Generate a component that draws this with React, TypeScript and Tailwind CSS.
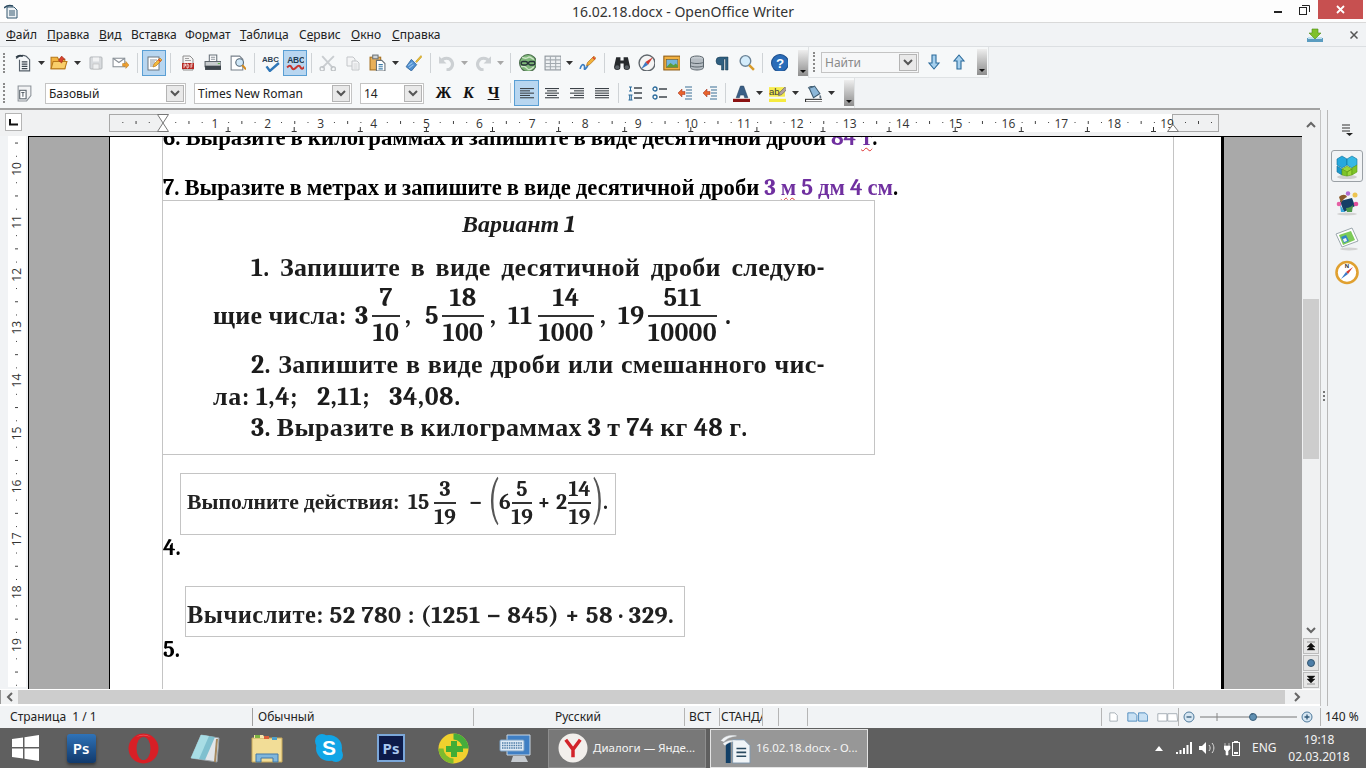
import React from "react";

const UI = "font-sans [font-family:Open_Sans,sans-serif]";
const SERIF = "font-serif [font-family:Liberation_Serif,serif]";

function S({ s = 16, children, vb = "0 0 16 16" }: { s?: number; children: React.ReactNode; vb?: string }) {
  return <svg width={s} height={s} viewBox={vb} fill="none">{children}</svg>;
}
const Btn = ({ w = "w-[25px]", active, children }: { w?: string; active?: boolean; children?: React.ReactNode }) => (
  <div className={`${w} h-[26px] flex items-center justify-center shrink-0 ${active ? "bg-[#b8d6f0] border border-[#5a9fd4]" : ""}`}>{children}</div>
);
const Arrow = ({ w = "w-[11px]", dim }: { w?: string; dim?: boolean }) => (
  <div className={`${w} shrink-0 flex items-center justify-center`}>
    <svg width="7" height="4" viewBox="0 0 7 4"><path d="M0 0h7L3.5 4z" fill={dim ? "#a8a8a8" : "#333"} /></svg>
  </div>
);
const Sep = ({ w = "w-[8px]" }: { w?: string }) => (
  <div className={`${w} shrink-0 flex justify-center`}><div className="w-px h-[20px] bg-[#cfd3d6]" /></div>
);
const Grip = () => <div className="h-[20px] w-[2px] border-l-2 border-dotted border-[#8a8a8a] shrink-0" />;
const Overflow = ({ cls }: { cls: string }) => (
  <div className={`${cls} w-[10px] h-[26px] shrink-0 bg-linear-to-b from-[#eeeeee] to-[#8e8e8e] flex items-end justify-center pb-[3px]`}>
    <svg width="6" height="3" viewBox="0 0 6 3"><path d="M0 0h6L3 3z" fill="#111" /></svg>
  </div>
);
const Chevron = () => (
  <svg width="10" height="7" viewBox="0 0 10 7" fill="none"><path d="M1 1l4 4 4-4" stroke="#555" strokeWidth="2" /></svg>
);
const Combo = ({ w, text, dim }: { w: string; text: string; dim?: boolean }) => (
  <div className={`${w} h-[21px] shrink-0 flex border border-[#c4c4c4] ${dim ? "bg-[#f6f7f8]" : "bg-white"}`}>
    <span className={`flex-1 pl-[3px] text-[12px] leading-[19px] whitespace-nowrap overflow-hidden ${dim ? "text-[#8a8a8a]" : "text-[#222]"}`}>{text}</span>
    <div className="w-[18px] bg-[#e9e9e9] border border-[#b4b4b4] m-[1px] flex items-center justify-center"><Chevron /></div>
  </div>
);

/* toolbar icons */
const IcNew = () => <S s={18}><path d="M1 4c3-3 6-3.500 9-2l3 3v10H4V5" fill="#f5f7f9" stroke="#56606a" /><path d="M6 7h5M6 9h5M6 11h5M6 13h5" stroke="#3c4650" /><path d="M1 3c2-2 4-2 6-1" stroke="#2e3a44" strokeWidth="1.500" /></S>;
const IcOpen = () => <S s={18} vb="0 0 17 17"><path d="M1 3h6l1 2h6v9H1z" fill="#f2b441" stroke="#b8791a" /><path d="M3 7h13l-2 7H1z" fill="#f9cf6a" stroke="#b8791a" /><path d="M8 6l3-4 3 3-2 .5-1 3z" fill="#d9442f" stroke="#a02a18" strokeWidth=".6" /></S>;
const IcSave = () => <S><rect x="2" y="2" width="12" height="12" rx="1" fill="#d8dbde" stroke="#b3b7ba" /><rect x="5" y="2.500" width="6" height="4" fill="#f2f3f4" /><rect x="5" y="9" width="6" height="5" fill="#eef0f1" stroke="#bbb" strokeWidth=".6" /></S>;
const IcMail = () => <S s={17}><rect x="1" y="4" width="11" height="8" fill="#fff" stroke="#8a9198" /><path d="M1 4l5.500 4L12 4" stroke="#8a9198" /><path d="M10 9h3V7l3 3.500-3 3v-2h-3z" fill="#f0a030" stroke="#b87a1a" strokeWidth=".5" /></S>;
const IcEdit = () => <S><rect x="2" y="2" width="11" height="13" fill="#fff" stroke="#6d7780" /><path d="M4 5h7M4 7h5M4 9h4M4 11h3" stroke="#8c969e" /><path d="M7 12l1-3 6-6 2 2-6 6z" fill="#f4bb3b" stroke="#b06a10" strokeWidth=".6" /><path d="M12.500 4.500l2 2" stroke="#d8402f" strokeWidth="1.500" /></S>;
const IcPdf = () => <S><path d="M3 1h7l3 3v11H3z" fill="#f4f4f4" stroke="#8e8e8e" /><path d="M5 3.500h4M5 5.500h6" stroke="#a0a0a0" /><rect x="2" y="8" width="12" height="6" fill="#b72a24" /><path d="M4 13v-4h1.500v2H4M7 9v4h1l1-2-1-2zM11 13V9h2M11 11h1.500" stroke="#fff" strokeWidth=".7" /></S>;
const IcPrint = () => <S s={17}><path d="M5 1h7v6H5z" fill="#fff" stroke="#68727a" /><path d="M6.500 3h4M6.500 5h4" stroke="#8a939a" /><path d="M1 7h15v5H1z" fill="#c8ccce" stroke="#5e666c" /><rect x="1" y="11" width="15" height="4" fill="#3d454b" /><rect x="13" y="8.500" width="2" height="1" fill="#5cb04a" /></S>;
const IcPreview = () => <S s={17}><path d="M2 2h8l3 3v10H2z" fill="#fff" stroke="#77808a" /><circle cx="10" cy="8" r="3.600" fill="#cfe7f7" stroke="#516474" /><path d="M12.500 10.500l3.500 4" stroke="#d28a1e" strokeWidth="2" /></S>;
const IcSpell = () => <S s={18}><text x="0" y="7" fontSize="7" fontWeight="700" fontFamily="Liberation Sans" fill="#2f4254" textLength="15">ABC</text><path d="M4 11l3 4 8-7" stroke="#2f77b8" strokeWidth="2.200" /></S>;
const IcAuto = () => <S s={18}><text x="1" y="8" fontSize="7.500" fontWeight="700" fontFamily="Liberation Sans" fill="#1f3c52" textLength="16">ABC</text><path d="M1 12c2-2 3-2 4 0s2 2 4 0 3-2 4 0 2 1 4-1" stroke="#c5352f" strokeWidth="1.800" /></S>;
const IcCut = () => <S s={17}><path d="M3 2l10 11M14 2L3 13" stroke="#c9cdd0" strokeWidth="1.800" /><circle cx="3" cy="14" r="2" stroke="#c0c4c7" strokeWidth="1.300" /><circle cx="13.500" cy="14" r="2" stroke="#c0c4c7" strokeWidth="1.300" /></S>;
const IcCopy = () => <S><path d="M2 2h6l2 2v7H2z" fill="#f4f5f6" stroke="#c3c6c9" /><path d="M7 6h5l2 2v7H7z" fill="#f4f5f6" stroke="#c3c6c9" /><path d="M8.500 9h4M8.500 11h4M8.500 13h4" stroke="#d4d6d8" /></S>;
const IcPaste = () => <S s={17}><rect x="1" y="3" width="10" height="12" fill="#e8b05a" stroke="#a5701f" /><rect x="3.500" y="1" width="5" height="3.500" fill="#cfd3d6" stroke="#6e7478" /><path d="M7 6h5l3 3v7H7z" fill="#fff" stroke="#667078" /><path d="M9 10h4M9 12h4M9 14h4" stroke="#3e7ca8" /></S>;
const IcBrush = () => <S s={17}><path d="M10 7l5-5.500 1 1L11 8z" fill="#f1c232" stroke="#a8851a" strokeWidth=".5" /><path d="M6 5l5 5-5 6-5-4z" fill="#4f8fd0" stroke="#2b5f95" strokeWidth=".7" /><path d="M3 11l4-3M4 13l4-3" stroke="#9cc7ee" /></S>;
const IcUndo = ({ f = false }: { f?: boolean }) => <S s={17}><g transform={f ? "matrix(-1 0 0 1 17 0)" : undefined}><path d="M3 7c2-4 8-4 10 0s-1 8-5 8" stroke="#ccd0d3" strokeWidth="3" /><path d="M1 2v7h7z" fill="#ccd0d3" /></g></S>;
const IcLink = () => <S s={17}><circle cx="8.500" cy="8.500" r="8" fill="#7fb87a" stroke="#4a6a4c" /><path d="M3 3c3 2 4 1 6 0s3 2 5 2M2 12c3-1 4 0 6 2s4 0 6-2" stroke="#cfe6c8" strokeWidth="1.300" /><rect x="2" y="7" width="6" height="3.400" rx="1.700" stroke="#263238" strokeWidth="1.300" /><rect x="9" y="7" width="6" height="3.400" rx="1.700" stroke="#263238" strokeWidth="1.300" /></S>;
const IcTable = () => <S s={17}><rect x="1" y="2" width="15" height="13" fill="#eef1f3" stroke="#8a9299" /><path d="M1 5.500h15M1 9h15M1 12h15M6 2v13M11 2v13" stroke="#a3aab0" /></S>;
const IcDraw = () => <S s={17}><path d="M1 14c1-4 3-5 4-3s-1 4 1 3 2-4 3-4" stroke="#3c7ec0" strokeWidth="1.600" /><path d="M7 11l1-3 6-6 2 2-6 6z" fill="#f3b23b" stroke="#a8691a" strokeWidth=".6" /><path d="M13 3l2 2" stroke="#dc4a33" strokeWidth="1.500" /></S>;
const IcBino = () => <S s={17}><path d="M3 3h4v3h3V3h4l2 9a3 3 0 1 1-6 0V9H7v3a3 3 0 1 1-6 0z" fill="#26292c" /><circle cx="4" cy="12.500" r="2" fill="#595f64" /><circle cx="13" cy="12.500" r="2" fill="#595f64" /></S>;
const IcCompass = () => <S s={17}><circle cx="8.500" cy="8.500" r="7.500" fill="#f4f4f4" stroke="#60676d" strokeWidth="1.300" /><path d="M14 3L9.500 10 7 7.500z" fill="#cf3a30" /><path d="M3 14l4-6.500L9.500 10z" fill="#3d79c2" /></S>;
const IcGallery = () => <S s={17}><rect x=".8" y="2" width="15.400" height="13" fill="#f2b140" stroke="#8e5b14" /><rect x="3" y="5" width="11" height="7.500" fill="#74b6dc" stroke="#6a4a14" strokeWidth=".5" /><path d="M3 12.500l4-4 3 2 2-1.500 2 2v1.500z" fill="#5d9d3b" /></S>;
const IcDb = () => <S><ellipse cx="8" cy="3.500" rx="6.500" ry="2.500" fill="#c7cdd2" stroke="#5c666d" /><path d="M1.500 3.500v9c0 1.500 3 2.500 6.500 2.500s6.500-1 6.500-2.500v-9" fill="#b6bdc3" stroke="#5c666d" /><path d="M1.500 7c1 2 12 2 13 0M1.500 10.500c1 2 12 2 13 0" stroke="#5c666d" /></S>;
const IcPilcrow = () => <S><path d="M14 2H6a4 4 0 0 0 0 8h1.500v5h2.500V4h1.500v11H14z" fill="#2f5f80" stroke="#16384f" strokeWidth=".5" /></S>;
const IcZoom = () => <S s={17}><circle cx="7" cy="6.500" r="5" fill="#d3ecfb" stroke="#6a8296" strokeWidth="1.300" /><path d="M10.500 10.500L15 15" stroke="#d89b2a" strokeWidth="2.400" /></S>;
const IcHelp = () => <S s={17}><circle cx="8.500" cy="8.500" r="8" fill="#2a6cb8" stroke="#1e4f8c" /><text x="8.500" y="13" textAnchor="middle" fontSize="12.500" fontWeight="700" fontFamily="Liberation Sans" fill="#fff">?</text></S>;
const IcStyles = () => <S s={17}><path d="M2 1h12v9l-4 5H2z" fill="#f2f3f4" stroke="#8b9298" /><rect x="3.500" y="5" width="6" height="8" fill="#fff" stroke="#59626a" /><path d="M5 7h3M6.500 7v4" stroke="#59626a" /></S>;
const IcDown = ({ up }: { up?: boolean }) => <S><g transform={up ? "matrix(1 0 0 -1 0 16)" : undefined}><path d="M6 1h4v8h3l-5 6-5-6h3z" fill="#a6d0ee" stroke="#2b6a9b" strokeWidth="1.100" /></g></S>;
const Align = ({ kind }: { kind: "l" | "c" | "r" | "j" }) => {
  const rows = [14, 10, 14, 10, 14];
  return <S>{rows.map((w, i) => { const ww = kind === "j" ? 14 : w; const x = kind === "c" ? 8 - ww / 2 : kind === "r" ? 15 - ww : 1; return <rect key={i} x={x} y={3 + i * 2.300} width={ww} height="1.100" fill="#3c4248" />; })}</S>;
};
const IcNum = () => <S><path d="M7 3h8M7 8h8M7 13h8" stroke="#3f464c" strokeWidth="1.300" /><path d="M2 2h3M3.500 2v4M2 6h3M1.500 10h4M1.500 15h4M2.700 10v5M4.300 10v5" stroke="#2a6a9b" /></S>;
const IcBul = () => <S><path d="M7 4h8M7 12h8" stroke="#3f464c" strokeWidth="1.400" /><circle cx="3" cy="4" r="2" stroke="#2a6a9b" strokeWidth="1.300" /><circle cx="3" cy="12" r="2" stroke="#2a6a9b" strokeWidth="1.300" /></S>;
const IcIndent = ({ c }: { c: string }) => <S><path d="M8 2h7M9 5h6M9 8h6M9 11h6M8 14h7" stroke="#3a6f96" strokeWidth="1.200" /><path d="M1 8l4-4v2.500h3v3H5V12z" fill={c} stroke="#9c2f1e" strokeWidth=".5" /></S>;
const IcFontColor = () => <S s={17}><path d="M7 1h3l4 11h-3l-.8-2.500H6.800L6 12H3z" fill="#3a5f86" stroke="#28435f" strokeWidth=".5" /><rect x="0" y="13" width="17" height="3.500" fill="#8a1212" /></S>;
const IcHl = () => <S s={17}><rect x="0" y="2" width="15" height="9" fill="#f7ec4e" /><text x="0" y="9" fontSize="9" fontFamily="Liberation Sans" fill="#3c3c3c">ab</text><path d="M9 10l1-3 5-5 2 2-5 5z" fill="#b0a0a0" stroke="#5d5d5d" strokeWidth=".6" /><rect x="0" y="13" width="17" height="3" fill="#f6eb3f" /></S>;
const IcFill = () => <S s={17}><path d="M4 3l5-2 5 7-6 4z" fill="#8cb7d8" stroke="#3e5c72" /><path d="M3 3c1-2 4-2 5-1" stroke="#3e5c72" /><path d="M14 9c1 1.500 2 2.500 1 3.500s-2-.5-1-3.500z" fill="#5b6f7e" /><rect x="0.500" y="13.500" width="16" height="2.500" fill="#fff" stroke="#333" /></S>;

function TopRuler() {
  const o = 53, p = 52.9, q = p / 4;
  const ticks: React.ReactNode[] = [];
  for (let k = -3; k < 76; k++) {
    if (k % 4 === 0) continue;
    const x = o + k * q;
    const mid = Math.abs(k % 4) === 2;
    ticks.push(<rect key={k} x={x} y={mid ? 11 : 12} width="1" height={mid ? 3 : 1} fill="#444" />);
  }
  for (let k = 0; k < 3; k++) ticks.push(<rect key={"r" + k} x={1063 + 13 * (k + 1)} y={k === 1 ? 11 : 12} width="1" height={k === 1 ? 3 : 1} fill="#444" />);
  const stops = Array.from({ length: 15 }, (_, j) => o + 66.1 * (j + 1));
  return (
    <svg width="1110" height="26" viewBox="0 0 1110 26" className="shrink-0" fill="none">
      <rect x=".5" y="4.500" width="53" height="17" fill="#f0f1f2" stroke="#a8a8a8" />
      <rect x="53" y="4" width="1010" height="18" fill="#fff" />
      <rect x="1063.500" y="4.500" width="46" height="17" fill="#f0f1f2" stroke="#a8a8a8" />
      {ticks}
      {Array.from({ length: 19 }, (_, i) => (
        <text key={i} x={o + (i + 1) * p} y="17.500" textAnchor="middle" fontSize="12" fontFamily="Open Sans" fill="#333">{i + 1}</text>
      ))}
      {stops.map((x, i) => <path key={i} d={`M${x} 17v4M${x - 2.500} 21.500h5`} stroke="#333" />)}
      <path d="M48.500 4.500h11l-5.500 8.500 5.500 8.500h-11l5.500-8.500z" fill="#fff" stroke="#777" />
      <path d="M1058.500 21.500h11l-5.500-7z" fill="#fff" stroke="#777" />
    </svg>
  );
}

function SideRuler() {
  const nums = Array.from({ length: 10 }, (_, i) => ({ n: i + 10, y: 33 + 52.9 * i }));
  const ticks: React.ReactNode[] = [];
  for (let k = -2; k < 40; k++) {
    if (k % 4 === 0) continue;
    const y = 33 + k * 13.225;
    const mid = Math.abs(k % 4) === 2;
    ticks.push(<rect key={k} x={mid ? 15 : 16} y={y} width={mid ? 3 : 1} height="1" fill="#444" />);
  }
  return (
    <svg width="28" height="551" viewBox="0 0 28 551" className="shrink-0">
      <rect x="8" y="0" width="18" height="551" fill="#fff" />
      {ticks}
      {nums.map(({ n, y }) => (
        <text key={n} x="0" y="0" transform={`translate(20.500 ${y}) rotate(-90)`} textAnchor="middle" fontSize="12" fontFamily="Open Sans" fill="#333">{n}</text>
      ))}
    </svg>
  );
}

const Frac = ({ n, d, w, bar = "border-[#333]" }: { n: string; d: string; w: string; bar?: string }) => (
  <span className={`${w} inline-flex flex-col items-center shrink-0`}>
    <span className="leading-[27px] h-[27px]">{n}</span>
    <span className={`w-full h-0 border-t-2 ${bar} mt-[3px]`} />
    <span className="leading-[27px] h-[27px] mt-[3px]">{d}</span>
  </span>
);
const Frac2 = ({ n, d, w }: { n: string; d: string; w: string }) => (
  <span className={`${w} inline-flex flex-col items-center shrink-0`}>
    <span className="leading-[22px] h-[22px]">{n}</span>
    <span className="w-full h-0 border-t-2 border-[#333] mt-[2px]" />
    <span className="leading-[22px] h-[22px] mt-[2px]">{d}</span>
  </span>
);
const Spaced = ({ words, cls }: { words: string[]; cls: string }) => (
  <div className={`flex justify-between w-[574px] ml-[38px] h-[28px] leading-[28px] whitespace-nowrap ${cls}`}>{words.map((w, i) => <span key={i}>{w}</span>)}</div>
);
const Line = ({ children, cls = "" }: { children: React.ReactNode; cls?: string }) => (
  <div className={`h-[25px] leading-[25px] text-[24px] scale-x-[0.945] origin-left font-bold text-black whitespace-nowrap ${SERIF} ${cls}`}>{children}</div>
);
const Squiggle = ({ children }: { children: React.ReactNode }) => (
  <span className="underline decoration-wavy decoration-[#d33] decoration-1 underline-offset-2">{children}</span>
);

const NavBtn = ({ children }: { children: React.ReactNode }) => (
  <div className="w-[16px] h-[16px] mb-[1px] ml-[1px] bg-[#e6e6e6] border border-[#bcbcbc] flex items-center justify-center">{children}</div>
);

/* sidebar */
const SbCubes = () => <S s={26} vb="0 0 26 26"><ellipse cx="13" cy="24" rx="10" ry="2" fill="#cfcfcf" /><path d="M3 6l5-3 5 3v6l-5 3-5-3z" fill="#27a8dd" stroke="#0d6f99" strokeWidth=".6" /><path d="M13 6l5-3 5 3v6l-5 3-5-3z" fill="#36b8e4" stroke="#0d6f99" strokeWidth=".6" /><path d="M3 13l5 3v6l-5-3z" fill="#1c97cb" stroke="#0d6f99" strokeWidth=".6" /><path d="M8 16l5-3 5 3-5 3zM13 19l5-3v6l-5 1z" fill="#9bd63a" stroke="#5d9a14" strokeWidth=".6" /><path d="M18 15l5-3v7l-5 3zM8 16l5 3v4l-5-1z" fill="#7ec42a" stroke="#5d9a14" strokeWidth=".6" /></S>;
const SbStyles = () => <S s={26} vb="0 0 26 26"><ellipse cx="13" cy="24" rx="10" ry="1.500" fill="#d2d2d2" /><path d="M6 11l12-3 3 8-11 6z" fill="#153f66" /><path d="M5 7c3-3 7-3 8 0-2 1-4 2-6 6z" fill="#8a5a2c" /><path d="M12 18c3 0 6-2 7-3l-1 7h-5z" fill="#4d9a4a" /><path d="M6 15l5 7H7z" fill="#3aa6dd" /><circle cx="5" cy="14" r="2.300" fill="#e55fa4" /><circle cx="22" cy="14" r="2.300" fill="#e2509a" /><circle cx="14" cy="3.500" r="2.200" fill="#b16ad4" /><circle cx="21" cy="5" r="2.500" fill="#edc44f" /></S>;
const SbNav = () => <S s={26} vb="0 0 26 26"><ellipse cx="15" cy="24" rx="9" ry="1.500" fill="#d2d2d2" /><path d="M2 9l16-6 6 13-16 6z" fill="#fff" stroke="#9ba7ad" /><path d="M5 10l12-4 4 9-12 5z" fill="#7ccb58" /><path d="M7 12l5-2 3 6-5 2z" fill="#2f85c8" /><path d="M9 14l3-1 1 3-3 1z" fill="#f0f4f7" /></S>;
const SbCompass = () => <S s={26} vb="0 0 26 26"><circle cx="13" cy="12.500" r="10.500" fill="#fff" stroke="#e0a030" strokeWidth="2.600" /><path d="M19 7l-7 5 2 2z" fill="#d43a30" /><path d="M7 19l5-7 2 2z" fill="#3a7bc8" /><text x="13" y="8" fontSize="6" textAnchor="middle" fontWeight="700" fontFamily="Liberation Sans" fill="#333">N</text></S>;

/* taskbar */
const Task = ({ children }: { children: React.ReactNode }) => <div className="w-[62px] h-full flex items-center justify-center shrink-0">{children}</div>;
const PsBlue = () => <div className="w-[29px] h-[29px] rounded-[3px] bg-linear-to-b from-[#2f73b8] to-[#123a6c] flex items-center justify-center text-white text-[15px] font-semibold shadow-[0_2px_3px_#0006]">Ps</div>;
const PsDark = () => <div className="w-[28px] h-[28px] bg-[#0d1b4a] border-2 border-[#7ba7d9] flex items-center justify-center text-[#a9c9ef] text-[15px] font-bold">Ps</div>;
const TbOpera = () => <S s={31} vb="0 0 31 31"><ellipse cx="15.500" cy="15.500" rx="15" ry="15" fill="#d81f26" /><ellipse cx="15.500" cy="15.500" rx="7" ry="11.500" fill="#5f5f5f" /><path d="M8 4a15 15 0 0 1 15 0c-5-2-10-2-15 0z" fill="#f0575c" /></S>;
const TbNote = () => <S s={32} vb="0 0 32 32"><path d="M12 3l18 3-2 24-26-4z" fill="#e2e6ea" stroke="#9aa0a5" /><path d="M12 3L2 26l14 2 10-23z" fill="#7fc0cf" /><path d="M12 3L2 26l8 1 10-23z" fill="#a8dde5" /><path d="M28 7l-2 23" stroke="#a5885e" strokeWidth="2" /></S>;
const TbFolder = () => <S s={32} vb="0 0 32 32"><path d="M1 6h30v24H1z" fill="#f2dd97" stroke="#c8a95a" /><path d="M3 3h9l2 3H3z" fill="#f5e6ac" /><rect x="4" y="3" width="5" height="3" fill="#7cb342" /><rect x="13" y="4" width="5" height="3" fill="#d9603b" /><rect x="21" y="5" width="5" height="3" fill="#4d9fc8" /><path d="M5 22h22v8h-5v-4H10v4H5z" fill="#7fb6dc" stroke="#4278a8" /></S>;
const TbSkype = () => <S s={32} vb="0 0 32 32"><circle cx="16" cy="16" r="13" fill="#12a5e6" /><circle cx="9" cy="9" r="7" fill="#12a5e6" /><circle cx="23" cy="23" r="7" fill="#12a5e6" /><text x="16" y="23" textAnchor="middle" fontSize="21" fontWeight="700" fontFamily="Liberation Sans" fill="#fff">S</text></S>;
const Tb360 = () => <S s={31} vb="0 0 31 31"><circle cx="15.500" cy="15.500" r="15" fill="#f1d12e" /><path d="M15.500.5a15 15 0 0 1 15 15h-6a9 9 0 0 0-9-9z" fill="#46ad3c" /><path d="M.5 15.500a15 15 0 0 0 15 15v-5a10 10 0 0 1-10-10z" fill="#7dbb2e" /><path d="M13 8h6v5h6v6h-6v5h-6v-5H8v-6h5z" fill="#41ad35" /></S>;
const TbKbd = () => <S s={32} vb="0 0 32 32"><path d="M8 3h23v20H8z" fill="#3f7fc4" stroke="#c9d6e2" /><path d="M14 24h12l3 6H12z" fill="#c6cbd0" /><rect x="1" y="8" width="24" height="11" rx="1" fill="#dfeaf5" stroke="#7ba2c7" /><path d="M3 11h20M3 13.500h20M3 16h20" stroke="#4f7ea8" strokeWidth="1.400" strokeDasharray="1.500 .8" /></S>;
const TbYandex = () => <S s={30} vb="0 0 31 31"><circle cx="15.500" cy="15.500" r="15" fill="#f2efec" /><path d="M8 7l7.500 10v8M23 7l-7.500 10" stroke="#d2232a" strokeWidth="3.600" /></S>;
const TbWriter = () => <S s={31} vb="0 0 32 32"><path d="M13 7h12l6 6v18H13z" fill="#f0f4f7" stroke="#7f98ac" /><path d="M17 16h10M17 20h10M17 24h10" stroke="#2a4a60" strokeWidth="1.800" /><rect x="6" y="9" width="5" height="22" fill="#123f66" /><path d="M1 8c4-5 9-6 16-5-6 1-10 2-13 6M3 11c4-3 8-4 13-3-5 1-8 2-11 5" fill="#f2f4f6" stroke="#dfe6ea" strokeWidth=".5" /></S>;

export default function App() {
  return (
    <div className={`w-[1366px] h-[768px] overflow-hidden flex flex-col bg-[#f1f3f5] text-[#222] ${UI}`}>
      {/* title bar */}
      <div className="h-[23px] shrink-0 bg-[#fdfdfd] border-b border-[#d9d9d9] flex items-start relative">
        <div className="w-[22px] h-[22px] flex items-center justify-center"><svg width="14" height="15" viewBox="0 0 14 15" fill="none"><path d="M3 3h7l3 3v8H3z" fill="#eef2f5" stroke="#33576f" /><path d="M5 7h6M5 9h6M5 11h6" stroke="#33576f" /><path d="M0 4c3-3 6-3 9-2" stroke="#2b4a60" strokeWidth="1.500" /></svg></div>
        <div className="flex-1 text-center text-[14px] leading-[23px] text-[#333] pl-[74px]">16.02.18.docx - OpenOffice Writer</div>
        <div className="w-[16px] h-[19px] flex items-center justify-center mr-[10px] pt-[5px]"><div className="w-[8px] h-[2px] bg-[#222]" /></div>
        <div className="w-[16px] h-[19px] flex items-center justify-center mr-[6px]"><svg width="11" height="10" viewBox="0 0 11 10" fill="none"><rect x=".5" y="2.500" width="7" height="7" fill="#fdfdfd" stroke="#222" /><path d="M3 .5h7.500V7" stroke="#222" /></svg></div>
        <div className="w-[45px] h-[19px] bg-[#c75050] mr-[3px] flex items-center justify-center"><svg width="9" height="9" viewBox="0 0 9 9"><path d="M1 1l7 7M8 1L1 8" stroke="#fff" strokeWidth="1.800" /></svg></div>
      </div>
      {/* menu bar */}
      <div className="h-[24px] shrink-0 border-b border-[#dcdfe2] flex items-center text-[12px] pl-[6px] relative">
        <span className="w-[41px]"><u>Ф</u>айл</span>
        <span className="w-[52px]"><u>П</u>равка</span>
        <span className="w-[32px]"><u>В</u>ид</span>
        <span className="w-[54px]">Вст<u>а</u>вка</span>
        <span className="w-[55px]">Фо<u>р</u>мат</span>
        <span className="w-[59px]"><u>Т</u>аблица</span>
        <span className="w-[52px]">С<u>е</u>рвис</span>
        <span className="w-[41px]"><u>О</u>кно</span>
        <span><u>С</u>правка</span>
        <div className="flex-1" />
        <div className="mr-[27px]"><svg width="16" height="14" viewBox="0 0 16 14"><path d="M0 10h16v4H0z" fill="#5a9cc0" /><path d="M1 9h14v2H1z" fill="#bfe0ee" /><path d="M5 1h6v4h3l-6 6-6-6h3z" fill="#7fc02a" stroke="#4c8a12" strokeWidth=".6" /></svg></div>
        <div className="mr-[8px]"><svg width="8" height="8" viewBox="0 0 8 8"><path d="M.5.500l7 7M7.500.500l-7 7" stroke="#555" strokeWidth="1.500" /></svg></div>
      </div>
      {/* toolbar 1 */}
      <div className="h-[31px] shrink-0 flex items-stretch">
        <div className="w-[809px] bg-[#f6f8f9] border-r border-[#dfe2e4] flex items-center pl-[3px]">
          <Grip />
          <div className="w-[7px]" />
          <Btn w="w-[24px]"><IcNew /></Btn><Arrow />
          <Btn w="w-[24px]"><IcOpen /></Btn><Arrow w="w-[12px]" />
          <Btn><IcSave /></Btn><Btn><IcMail /></Btn>
          <Sep w="w-[9px]" />
          <Btn w="w-[24px]" active><IcEdit /></Btn>
          <Sep w="w-[9px]" />
          <Btn><IcPdf /></Btn><Btn><IcPrint /></Btn><Btn><IcPreview /></Btn>
          <Sep />
          <Btn><IcSpell /></Btn>
          <Btn w="w-[24px]" active><IcAuto /></Btn>
          <Sep />
          <Btn><IcCut /></Btn><Btn><IcCopy /></Btn><Btn><IcPaste /></Btn><Arrow />
          <Btn><IcBrush /></Btn>
          <Sep />
          <Btn><IcUndo /></Btn><Arrow dim />
          <Btn><IcUndo f /></Btn><Arrow dim />
          <Sep w="w-[9px]" />
          <Btn><IcLink /></Btn>
          <Btn w="w-[24px]"><IcTable /></Btn><Arrow />
          <Btn><IcDraw /></Btn>
          <Sep w="w-[9px]" />
          <Btn><IcBino /></Btn>
          <Btn w="w-[24px]"><IcCompass /></Btn>
          <Btn w="w-[26px]"><IcGallery /></Btn>
          <Btn><IcDb /></Btn><Btn><IcPilcrow /></Btn>
          <Btn w="w-[24px]"><IcZoom /></Btn>
          <Sep w="w-[9px]" />
          <Btn><IcHelp /></Btn>
          <Overflow cls="ml-[6px]" />
        </div>
        <div className="w-[180px] bg-[#f6f8f9] border-r border-b border-[#dfe2e4] flex items-center pl-[4px]">
          <Grip />
          <div className="w-[6px]" />
          <Combo w="w-[98px]" text="Найти" dim />
          <div className="w-[2px]" />
          <Btn><IcDown /></Btn><Btn><IcDown up /></Btn>
          <Overflow cls="ml-[6px]" />
        </div>
      </div>
      {/* toolbar 2 */}
      <div className="h-[30px] shrink-0 flex items-stretch">
        <div className="w-[855px] bg-[#f6f8f9] border-r border-[#dfe2e4] flex items-center pl-[3px]">
          <Grip />
          <div className="w-[7px]" />
          <Btn><IcStyles /></Btn>
          <div className="w-[8px]" />
          <Combo w="w-[141px]" text="Базовый" />
          <div className="w-[8px]" />
          <Combo w="w-[158px]" text="Times New Roman" />
          <div className="w-[8px]" />
          <Combo w="w-[64px]" text="14" />
          <div className="w-[7px]" />
          <Btn><span className={`${SERIF} font-bold text-[16px] text-[#111]`}>Ж</span></Btn>
          <Btn><span className={`${SERIF} font-bold italic text-[16px] text-[#111]`}>К</span></Btn>
          <Btn><span className={`${SERIF} font-bold underline text-[16px] text-[#111]`}>Ч</span></Btn>
          <Sep />
          <Btn active><Align kind="l" /></Btn>
          <Btn><Align kind="c" /></Btn><Btn><Align kind="r" /></Btn><Btn><Align kind="j" /></Btn>
          <Sep />
          <Btn><IcNum /></Btn><Btn><IcBul /></Btn>
          <Btn><IcIndent c="#e8632c" /></Btn><Btn><IcIndent c="#e8632c" /></Btn>
          <Sep w="w-[7px]" />
          <Btn><IcFontColor /></Btn><Arrow />
          <Btn><IcHl /></Btn><Arrow />
          <Btn><IcFill /></Btn><Arrow />
          <Overflow cls="ml-[7px]" />
        </div>
      </div>
      {/* main */}
      <div className="flex-1 min-h-0 flex">
        <div className="w-[1320px] flex flex-col border-t-2 border-[#a2a2a2]">
          {/* ruler row */}
          <div className="h-[26px] shrink-0 flex bg-[#f0f1f2]">
            <div className="w-[109px] shrink-0 pl-[5px] pt-[3px]">
              <div className="w-[17px] h-[18px] bg-white border border-[#b5b5b5] flex items-center justify-center">
                <svg width="9" height="7" viewBox="0 0 9 7" fill="none"><path d="M1 0v5.500h8" stroke="#111" strokeWidth="2" /></svg>
              </div>
            </div>
            <TopRuler />
            <div className="flex-1" />
            <div className="w-[18px] shrink-0 flex justify-center pt-[11px]"><svg width="10" height="7" viewBox="0 0 10 7" fill="none"><path d="M1 6l4-4 4 4" stroke="#666" strokeWidth="2" /></svg></div>
          </div>
          {/* document row */}
          <div className="flex-1 min-h-0 flex">
            <SideRuler />
            <div className="flex-1 min-w-0 bg-[#a9a9a9] border-t border-l border-black pl-[80px] overflow-hidden">
              <div className="w-[1115px] h-full bg-white border-l border-r-[3px] border-black pl-[52px] pr-[47px]">
                <div className="h-full border-x border-[#c4c4c4] overflow-hidden">
                  <div className="-mt-[12px]">
                    <Line cls="mb-[25px]">6. Выразите в килограммах и запишите в виде десятичной дроби <span className="text-[#7030a0]">84 <Squiggle>т</Squiggle></span>.</Line>
                    <Line>7. Выразите в метрах и запишите в виде десятичной дроби <span className="text-[#7030a0]">3 <Squiggle>м</Squiggle> 5 дм 4 см</span>.</Line>
                  </div>
                  {/* picture 1 */}
                  <div className={`w-[712px] h-[255px] border border-l-0 border-[#c4c4c4] bg-white pl-[50px] pt-[8px] text-[#1c1c1c] font-bold text-[26px] tracking-[0.3px] blur-[0.4px] ${SERIF}`}>
                    <div className="h-[30px] leading-[30px] italic text-center text-[24px] tracking-normal -ml-[50px]">Вариант 1</div>
                    <div className="h-[15px]" />
                    <Spaced cls="" words={["1.", "Запишите", "в", "виде", "десятичной", "дроби", "следую-"]} />
                    <div className="h-[60px] mt-[4px] flex items-center whitespace-nowrap">
                      <span className="w-[142px]">щие числа:</span>
                      <span className="w-[17px]">3</span><Frac n="7" d="10" w="w-[28px]" /><span className="ml-[5px] w-[20px]">,</span>
                      <span className="w-[17px]">5</span><Frac n="18" d="100" w="w-[42px]" /><span className="ml-[6px] w-[18px]">,</span>
                      <span className="w-[30px]">11</span><Frac n="14" d="1000" w="w-[56px]" /><span className="ml-[6px] w-[18px]">,</span>
                      <span className="w-[30px]">19</span><Frac n="511" d="10000" w="w-[69px]" /><span className="ml-[8px]">.</span>
                    </div>
                    <div className="h-[5px]" />
                    <Spaced cls="" words={["2.", "Запишите", "в", "виде", "дроби", "или", "смешанного", "чис-"]} />
                    <div className="h-[4px]" />
                    <div className="h-[28px] leading-[28px] whitespace-pre tracking-[0.6px]">ла: 1,4;   2,11;   34,08.</div>
                    <div className="h-[3px]" />
                    <div className="h-[28px] leading-[28px] ml-[38px] whitespace-nowrap">3. Выразите в килограммах 3 т 74 кг 48 г.</div>
                  </div>
                  {/* picture 2 */}
                  <div className={`ml-[17px] mt-[18px] w-[436px] h-[62px] border border-[#c4c4c4] flex items-center pl-[6px] pb-[3px] text-[#222] font-bold text-[21.7px] whitespace-nowrap blur-[0.3px] ${SERIF}`}>
                    <span className="w-[221px]">Выполните действия:</span>
                    <span className="w-[26px]">15</span><Frac2 n="3" d="19" w="w-[22px]" />
                    <span className="w-[32px] text-center pl-[8px]">−</span>
                    <span className="w-[10px] text-[56px] font-normal leading-[56px] -mt-[7px] scale-x-[0.6] origin-left text-[#555]">(</span>
                    <span className="ml-[1px] w-[13px]">6</span><Frac2 n="5" d="19" w="w-[20px]" />
                    <span className="w-[24px] text-center">+</span>
                    <span className="w-[12px]">2</span><Frac2 n="14" d="19" w="w-[23px]" />
                    <span className="w-[12px] text-[56px] font-normal leading-[56px] -mt-[7px] scale-x-[0.6] origin-left text-[#555]">)</span>
                    <span>.</span>
                  </div>
                  <Line>4.</Line>
                  {/* picture 3 */}
                  <div className={`ml-[22px] mt-[26px] w-[500px] h-[51px] border border-[#c4c4c4] flex items-center pl-[1px] pt-[7px] text-[#222] font-bold text-[24.5px] tracking-[0.47px] whitespace-nowrap blur-[0.3px] ${SERIF}`}>Вычислите: 52 780 : (1251 − 845) + 58 · 329.</div>
                  <Line>5.</Line>
                </div>
              </div>
            </div>
            {/* vertical scrollbar */}
            <div className="w-[18px] shrink-0 bg-[#f0f1f2] flex flex-col">
              <div className="h-[163px]" />
              <div className="mx-[1px] h-[160px] bg-[#cdcdcd]" />
              <div className="flex-1 flex items-end justify-center pb-[4px]"><svg width="10" height="7" viewBox="0 0 10 7" fill="none"><path d="M1 1l4 4 4-4" stroke="#666" strokeWidth="2" /></svg></div>
              <NavBtn><svg width="10" height="10" viewBox="0 0 10 10"><path d="M1 1h8M5 2L1 6h8zM5 5L1 9h8z" fill="#111" stroke="#111" strokeWidth=".4" /></svg></NavBtn>
              <NavBtn><div className="w-[8px] h-[8px] rounded-full bg-[#4d7ea8] border border-[#34566f]" /></NavBtn>
              <NavBtn><svg width="10" height="10" viewBox="0 0 10 10"><path d="M1 9h8M5 8L1 4h8zM5 5L1 1h8z" fill="#111" stroke="#111" strokeWidth=".4" /></svg></NavBtn>
            </div>
          </div>
          {/* horizontal scrollbar */}
          <div className="h-[17px] shrink-0 border-b-2 border-white flex items-stretch pt-[1px] bg-white">
            <div className="w-[18px] shrink-0 bg-[#f0f1f2] flex items-center justify-center border-l border-[#999]"><svg width="7" height="10" viewBox="0 0 7 10" fill="none"><path d="M6 1L2 5l4 4" stroke="#666" strokeWidth="2" /></svg></div>
            <div className="w-[1267px] bg-[#cdcdcd]" />
            <div className="flex-1 bg-[#f0f1f2] flex items-center justify-center pr-[10px]"><svg width="7" height="10" viewBox="0 0 7 10" fill="none"><path d="M1 1l4 4-4 4" stroke="#666" strokeWidth="2" /></svg></div>
          </div>
        </div>
        {/* sidebar */}
        <div className="flex-1 flex border-t-2 border-[#f1f3f5]">
          <div className="w-[7px] border-l border-[#c4c4c4] flex items-center justify-center">
            <div className="w-[2px] h-[10px] border-l-2 border-dotted border-[#777] -mt-[24px]" />
          </div>
          <div className="flex-1 border-l border-[#b8b8b8] flex flex-col items-center">
            <div className="h-[38px] w-full flex items-center justify-center">
              <svg width="14" height="14" viewBox="0 0 14 14"><path d="M2 3h8M2 6h8M2 9h8" stroke="#333" strokeWidth="1.200" /><path d="M6 11h7l-3.500 3z" fill="#222" /></svg>
            </div>
            <div className="w-[32px] h-[32px] mt-[2px] border border-[#9aa0a5] rounded-[3px] flex items-center justify-center"><SbCubes /></div>
            <div className="h-[35px] flex items-center mt-[3px]"><SbStyles /></div>
            <div className="h-[35px] flex items-center"><SbNav /></div>
            <div className="h-[35px] flex items-center"><SbCompass /></div>
          </div>
        </div>
      </div>
      {/* status bar */}
      <div className="h-[22px] shrink-0 flex items-stretch text-[12px] leading-[22px] text-[#222] bg-[#f1f3f5] whitespace-nowrap">
        <div className="w-[252px] pl-[10px] whitespace-pre">Страница  1 / 1</div>
        <div className="w-[221px] pl-[5px] my-[2px] border-l border-[#a0a0a0] leading-[18px]">Обычный</div>
        <div className="w-[211px] pl-[81px] my-[2px] border-l border-[#b5b5b5] leading-[18px]">Русский</div>
        <div className="w-[35px] pl-[4px] my-[2px] border-l border-[#b5b5b5] leading-[18px]">ВСТ</div>
        <div className="w-[43px] pl-px my-[2px] border-l border-[#b5b5b5] leading-[18px] overflow-hidden">СТАНДАРТ</div>
        <div className="w-[16px] my-[2px] border-l border-[#b5b5b5]" />
        <div className="w-[29px] my-[2px] border-l border-[#b5b5b5]" />
        <div className="w-[294px] my-[2px] border-l border-[#b5b5b5]" />
        <div className="w-[77px] my-[2px] border-l border-[#b5b5b5] flex items-center pl-[7px] gap-[3px]">
          <svg width="11" height="12" viewBox="0 0 11 12"><path d="M1 1h6l3 3v7H1z" fill="#fff" stroke="#9aa4ac" /></svg>
          <div className="w-[3px]" />
          <svg width="26" height="12" viewBox="0 0 26 12"><path d="M1 1h8l3 3v7H1zM14 1h8l3 3v7H14z" fill="#c9e1f4" stroke="#3f7fb6" /></svg>
          <div className="w-[3px]" />
          <svg width="26" height="12" viewBox="0 0 26 12"><path d="M1 2h11v9H1zM13 2h11l1 9H13z" fill="#fff" stroke="#9aa4ac" /></svg>
        </div>
        <div className="w-[142px] my-[2px] border-l border-[#b5b5b5] flex items-center pl-[3px]">
          <svg width="136" height="14" viewBox="0 0 136 14">
            <circle cx="7" cy="7" r="5" fill="#d6e6f2" stroke="#4f7a9c" /><path d="M4.500 7h5" stroke="#2f5878" strokeWidth="1.300" />
            <path d="M18 7h97" stroke="#777" /><path d="M35 3v8" stroke="#888" />
            <circle cx="71" cy="7" r="3.500" fill="#5f8fb2" stroke="#3b5f7b" /><path d="M70 3v2" stroke="#3b5f7b" />
            <circle cx="125" cy="7" r="5" fill="#d6e6f2" stroke="#4f7a9c" /><path d="M122.500 7h5M125 4.500v5" stroke="#2f5878" strokeWidth="1.300" />
          </svg>
        </div>
        <div className="flex-1 my-[2px] border-l border-[#b5b5b5] pl-[4px] leading-[18px]">140 %</div>
      </div>
      {/* taskbar */}
      <div className="h-[40px] shrink-0 bg-[#5f5f5f] flex items-center text-white">
        <div className="w-[50px] h-full shrink-0 flex items-center justify-center">
          <svg width="27" height="26" viewBox="0 0 27 26"><path d="M0 4l11-1.600V12H0zM12.500 2.200L27 0v12H12.500zM0 13.500h11v9.900L0 22zM12.500 13.500H27V26l-14.500-2.200z" fill="#fff" /></svg>
        </div>
        <Task><PsBlue /></Task>
        <Task><TbOpera /></Task>
        <Task><TbNote /></Task>
        <Task><TbFolder /></Task>
        <Task><TbSkype /></Task>
        <Task><PsDark /></Task>
        <Task><Tb360 /></Task>
        <Task><TbKbd /></Task>
        <div className="ml-[2px] w-[158px] h-[39px] shrink-0 bg-[#787878] border border-[#8e8e8e] flex items-center pl-[9px] gap-[5px]">
          <TbYandex /><span className="text-[11.5px] whitespace-nowrap text-[#f4f4f4]">Диалоги — Янде...</span>
        </div>
        <div className="ml-[4px] w-[158px] h-[39px] shrink-0 bg-[#979797] border border-[#e4e4e4] flex items-center pl-[9px] gap-[5px]">
          <TbWriter /><span className="text-[11.5px] whitespace-nowrap text-[#f4f4f4]">16.02.18.docx - О...</span>
        </div>
        <div className="flex-1" />
        <svg width="8" height="5" viewBox="0 0 8 5" className="mr-[13px]"><path d="M0 5h8L4 0z" fill="#fff" /></svg>
        <svg width="16" height="12" viewBox="0 0 16 12" className="mr-[7px]"><path d="M0 10h2v2H0zM3.500 8h2v4h-2zM7 6h2v6H7zM10.500 3h2v9h-2zM14 0h2v12h-2z" fill="#fff" /></svg>
        <svg width="16" height="14" viewBox="0 0 16 14" fill="none" className="mr-[9px]"><path d="M0 5h3l4-4v12L3 9H0z" fill="#fff" /><path d="M10 4c1.500 2 1.500 4 0 6M13 2c2.500 3 2.500 7 0 10" stroke="#ddd" /></svg>
        <svg width="16" height="16" viewBox="0 0 16 16" fill="none" className="mr-[12px]"><path d="M1 3v3M5 3v3M0 6h6v3l-2 2v4H2v-4L0 9z" fill="#fff" stroke="#fff" strokeWidth=".6" /><rect x="8.500" y="2.500" width="7" height="13" stroke="#fff" /><rect x="10" y="1" width="4" height="1" fill="#fff" /><rect x="10" y="12" width="4" height="2" fill="#fff" /></svg>
        <span className="text-[12px] w-[24px] text-[#f4f4f4]">ENG</span>
        <div className="w-[86px] mr-[4px] text-center text-[12px] leading-[17px] text-[#f4f4f4]"><div>19:18</div><div>02.03.2018</div></div>
      </div>
    </div>
  );
}
